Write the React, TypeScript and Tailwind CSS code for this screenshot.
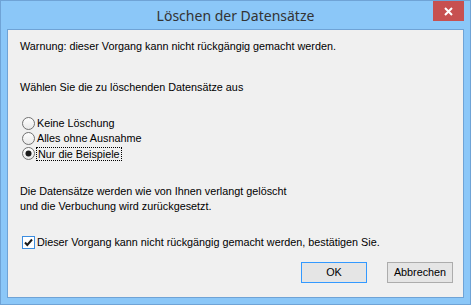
import React from "react";

function Radio({ checked }: { checked?: boolean }) {
  return (
    <svg width="13" height="13" viewBox="0 0 13 13" className="shrink-0">
      <defs>
        <linearGradient id="rg" x1="0" y1="0" x2="0" y2="1">
          <stop offset="0" stopColor="#ffffff" />
          <stop offset="1" stopColor="#e8e8e8" />
        </linearGradient>
      </defs>
      <circle cx="6.5" cy="6.5" r="6" fill="url(#rg)" stroke="#707070" strokeWidth="1" />
      {checked && <circle cx="6.5" cy="6.5" r="3" fill="#1a1a1a" />}
    </svg>
  );
}

function Check() {
  return (
    <svg width="13" height="13" viewBox="0 0 13 13" className="shrink-0">
      <rect x="0.5" y="0.5" width="12" height="12" fill="#ffffff" stroke="#3c8de0" strokeWidth="1" />
      <path d="M3 6.5 L5.3 9 L10 3.5" fill="none" stroke="#1a1a1a" strokeWidth="2" />
    </svg>
  );
}

export default function App() {
  const body = { fontFamily: "'Liberation Sans', Arial, sans-serif" };
  return (
    <div className="w-[471px] h-[305px] bg-[#8bc7f8] border border-[#6fa3d6] flex flex-col relative select-none">
      <div className="h-[28px] flex items-center justify-center text-[14px] text-[#333333]" style={{ fontFamily: "'Noto Sans', 'Open Sans', sans-serif" }}>
        Löschen der Datensätze
      </div>
      <div className="absolute top-0 right-[6px] w-[31px] h-[20px] bg-[#c75050] flex items-center justify-center">
        <svg width="9" height="9" viewBox="0 0 9 9">
          <path d="M1 1 L8 8 M8 1 L1 8" stroke="#ffffff" strokeWidth="2" />
        </svg>
      </div>
      <div className="mx-[6px] h-[269px] bg-[#f0f0f0] border border-[#6fa3d6] flex flex-col text-[10.8px] text-black leading-[13px] pl-[12px]" style={body}>
        <div className="mt-[10px] h-[13px]">Warnung: dieser Vorgang kann nicht rückgängig gemacht werden.</div>
        <div className="mt-[28px] h-[13px]">Wählen Sie die zu löschenden Datensätze aus</div>
        <div className="mt-[23px] flex flex-col gap-[2px] pl-[2px]">
          <div className="flex items-center gap-[2px] h-[13px]"><Radio /><span>Keine Löschung</span></div>
          <div className="flex items-center gap-[2px] h-[13px]"><Radio /><span>Alles ohne Ausnahme</span></div>
          <div className="flex items-center gap-[1px] h-[13px]"><Radio checked /><span className="border border-dotted border-black px-[1px] leading-[12px]">Nur die Beispiele</span></div>
        </div>
        <div className="mt-[24px] leading-[15px]">Die Datensätze werden wie von Ihnen verlangt gelöscht<br />und die Verbuchung wird zurückgesetzt.</div>
        <div className="mt-[22px] h-[13px] flex items-center gap-[2px] pl-[2px]"><Check /><span>Dieser Vorgang kann nicht rückgängig gemacht werden, bestätigen Sie.</span></div>
        <div className="mt-[13px] flex justify-end gap-[20px] pr-[10px]">
          <button className="w-[66px] h-[21px] border border-[#3399ff] bg-[#e5e5e5] text-[10.8px] leading-none" style={body}>OK</button>
          <button className="w-[66px] h-[21px] border border-[#acacac] bg-[#e5e5e5] text-[10.8px] leading-none" style={body}>Abbrechen</button>
        </div>
      </div>
    </div>
  );
}
